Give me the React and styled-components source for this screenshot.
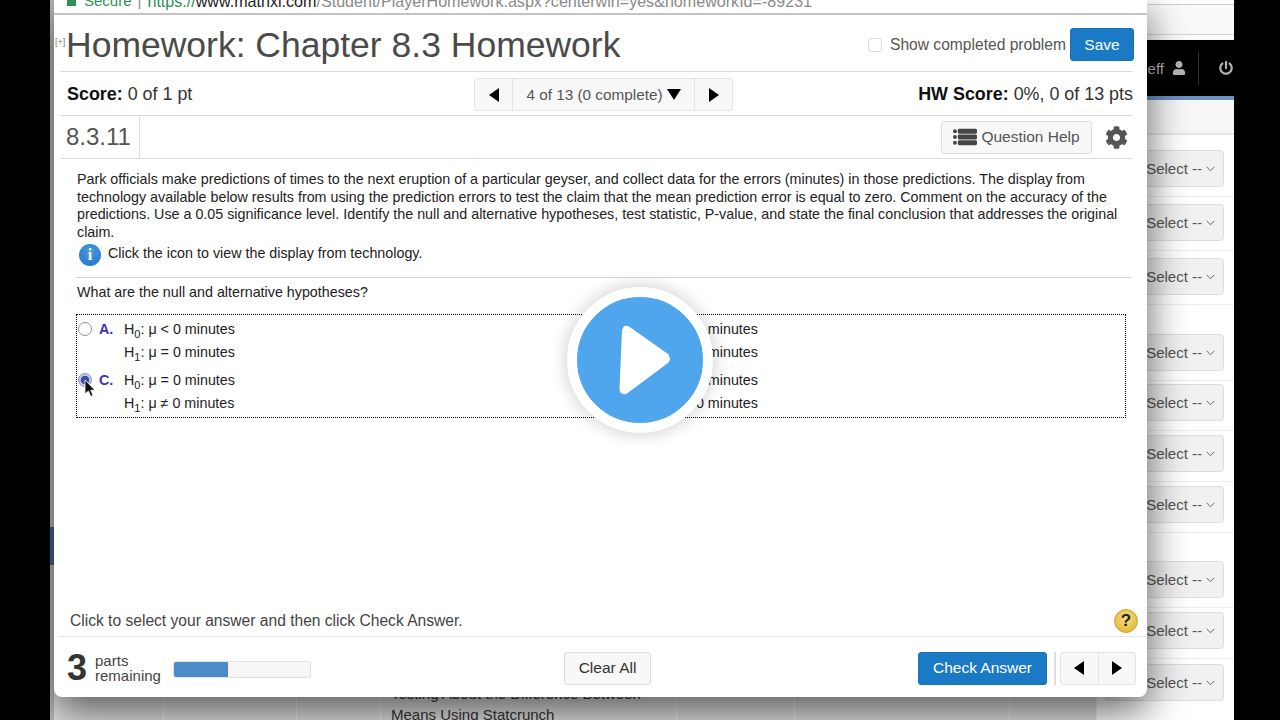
import React from "react";
import styled, { createGlobalStyle, css } from "styled-components";
import { FaCog, FaPowerOff, FaUser } from "react-icons/fa";

const sans = `"Liberation Sans", Arial, sans-serif`;

const GlobalStyle = createGlobalStyle`
  html, body {
    margin: 0;
    background: #000;
    font-family: ${sans};
  }
`;

/*
  page behind the dialog
*/
const Stage = styled.div`
  width: 1280px;
  height: 720px;
  background: #000;
  padding-left: 50px;
  box-sizing: border-box;
  position: relative;
  overflow: hidden;
`;

const Backdrop = styled.div`
  width: 1184px;
  height: 720px;
  display: flex;
  background: #fff;
  overflow: hidden;
`;

const SideRail = styled.div`
  width: 4px;
  flex: none;
  background: #b9b9b9;
  padding-top: 527px;
  box-sizing: border-box;
`;

const SideTab = styled.div`
  height: 38px;
  background: #46658c;
`;

const BackMain = styled.div`
  flex: 1;
  min-width: 0;
  display: flex;
  flex-direction: column;
`;

const TopStrip = styled.div`
  height: 40px;
  flex: none;
  box-sizing: border-box;
  background: linear-gradient(
    #fff 4px,
    #ccc 4px,
    #ccc 5px,
    #fafafa 5px,
    #fafafa 34px,
    #d5d5d5 34px,
    #d5d5d5 35px,
    #fafafa 35px
  );
`;

const NavBar = styled.div`
  height: 56px;
  flex: none;
  background: #000;
  color: #b5b5b5;
  display: flex;
  align-items: center;
  justify-content: flex-end;
  font-size: 15px;
  padding-right: 1px;
`;

const NavName = styled.span`
  margin-right: 8px;
`;

const NavSplit = styled.span`
  width: 1px;
  height: 33px;
  background: #333;
  margin: 0 20px 0 12px;
`;

const BlueRule = styled.div`
  height: 4px;
  flex: none;
  background: #6d8fc4;
`;

const HeadPanel = styled.div`
  height: 35px;
  flex: none;
  box-sizing: border-box;
  background: #f7f7f7;
  border-bottom: 2px solid #e6e6e6;
`;

const Row = styled.div`
  height: ${(p) => p.$h}px;
  flex: none;
  box-sizing: border-box;
  display: flex;
  justify-content: flex-end;
  align-items: flex-end;
  padding: 0 10px 9px 0;
  border-bottom: 1px solid #eee;
`;

const LastRow = styled.div`
  flex: 1;
  display: grid;
  grid-template-columns: 110px 133px 84px 296px 118px 215px 87px 1fr;
`;

const Cell = styled.div`
  background: #e2e2e2;
  border-right: 1px solid #f2f2f2;
  font-size: 15px;
  line-height: 21px;
  color: #333;
  padding: 24px 0 0 10px;
`;

const SelectBox = styled.div`
  width: 120px;
  height: 37px;
  flex: none;
  box-sizing: border-box;
  background: #f1f1f1;
  border: 1px solid #ddd;
  border-radius: 4px;
  color: #555;
  font-size: 15px;
  display: flex;
  align-items: center;
  justify-content: flex-end;
  gap: 4px;
  padding-right: 8px;
`;

const LastSelect = styled(SelectBox)`
  margin: 5px 0 0 7px;
`;

const Chevron = () => (
  <svg width="9" height="6" viewBox="0 0 9 6">
    <path d="M.7.9l3.8 3.8L8.3.9" fill="none" stroke="#666" strokeWidth="1" />
  </svg>
);

const Select = ({ as: Box = SelectBox }) => (
  <Box>
    Select --
    <Chevron />
  </Box>
);

/*
  dialog
*/
const Dialog = styled.div`
  position: absolute;
  left: 54px;
  top: 0;
  width: 1093px;
  height: 697px;
  background: #fff;
  border-radius: 0 0 8px 8px;
  box-shadow: 0 14px 40px rgba(0, 0, 0, 0.62);
  display: flex;
  flex-direction: column;
`;

const AddressBar = styled.div`
  height: 15px;
  flex: none;
  box-sizing: border-box;
  border-bottom: 2px solid #c4c4c4;
  overflow: hidden;
  display: flex;
  align-items: flex-end;
  gap: 6px;
  padding: 0 0 3px 13px;
  font-size: 15px;
  line-height: 18px;
  color: #8a8a8a;
  white-space: nowrap;
`;

const Lock = styled.span`
  width: 9px;
  height: 8px;
  background: #2f8f55;
  margin: 0 2px 4px 0;
`;

const SecureText = styled.span`
  color: #2f8f55;
`;

const Address = styled.span`
  font-size: 16.1px;
`;

const Host = styled.span`
  color: #222;
`;

const ruledCSS = css`
  margin: 0 14px 0 6px;
  border-bottom: 1px solid #ddd;
  display: flex;
  align-items: center;
  flex: none;
`;

const TitleRow = styled.div`
  ${ruledCSS}
  height: 57px;
  box-sizing: border-box;
  position: relative;
  padding: 3px 0 0 6px;
  justify-content: space-between;
`;

const Expand = styled.span`
  position: absolute;
  left: -5px;
  top: 22px;
  font-size: 9px;
  color: #777;
`;

const Title = styled.h1`
  margin: 1px 0 0;
  font-size: 35.5px;
  font-weight: 400;
  color: #4a4a4a;
`;

const TitleTools = styled.div`
  display: flex;
  align-items: center;
  margin-right: -1px;
`;

const Checkbox = styled.span`
  width: 14px;
  height: 14px;
  box-sizing: border-box;
  border: 1px solid #ddd;
  border-radius: 3px;
  margin-right: 8px;
`;

const ShowLabel = styled.span`
  font-size: 15.6px;
  color: #555;
  margin-right: 4px;
`;

const PrimaryButton = styled.button`
  height: ${(p) => p.$h}px;
  width: ${(p) => p.$w}px;
  padding: 0;
  border: 1px solid #1673ba;
  border-radius: 3px;
  background: #1a7ac6;
  color: #fff;
  font-family: ${sans};
  font-size: 15.5px;
`;

const ScoreRow = styled.div`
  ${ruledCSS}
  height: 44px;
  box-sizing: border-box;
  display: grid;
  grid-template-columns: 407px auto 1fr;
  padding: 2px 0 0 7px;
`;

const ScoreText = styled.div`
  font-size: 17.9px;
  color: #333;
  text-align: ${(p) => p.$align || "left"};
  b {
    color: #111;
  }
`;

const Pager = styled.div`
  display: flex;
  height: 33px;
  box-sizing: border-box;
  border: 1px solid #e4e4e4;
  border-radius: 3px;
  background: #f8f8f8;
`;

const PagerArrow = styled.div`
  width: 37px;
  display: flex;
  align-items: center;
  justify-content: center;
`;

const PagerLabel = styled.div`
  width: 183px;
  box-sizing: border-box;
  border-left: 1px solid #e4e4e4;
  border-right: 1px solid #e4e4e4;
  display: flex;
  align-items: center;
  justify-content: center;
  gap: 4px;
  font-size: 15.3px;
  color: #555;
`;

const triangles = {
  left: "border-width: 7.5px 10px 7.5px 0; border-color: transparent #000 transparent transparent;",
  right: "border-width: 7.5px 0 7.5px 10px; border-color: transparent transparent transparent #000;",
  down: "border-width: 11px 7.5px 0 7.5px; border-color: #000 transparent transparent transparent;",
};

const Triangle = styled.span`
  width: 0;
  height: 0;
  border-style: solid;
  ${(p) => triangles[p.$dir]}
`;

const QuestionRow = styled.div`
  ${ruledCSS}
  height: 43px;
  box-sizing: border-box;
`;

const QuestionNumber = styled.div`
  align-self: stretch;
  width: 80px;
  box-sizing: border-box;
  border-right: 1px solid #ddd;
  font-size: 24px;
  color: #555;
  display: flex;
  align-items: center;
  padding-left: 6px;
`;

const HelpButton = styled.button`
  margin-left: auto;
  width: 151px;
  height: 33px;
  padding: 0;
  box-sizing: border-box;
  background: #f8f8f8;
  border: 1px solid #ddd;
  border-radius: 3px;
  display: flex;
  align-items: center;
  justify-content: center;
  gap: 4px;
  font-family: ${sans};
  font-size: 15.5px;
  color: #555;
`;

const GearIcon = styled(FaCog)`
  color: #555;
  margin: 0 5px 0 13px;
  font-size: 23px;
`;

const Body = styled.div`
  flex: 1;
  padding: 12px 16px 0 23px;
  font-size: 14.3px;
  color: #222;
`;

const Prompt = styled.p`
  margin: 0;
  line-height: 17.5px;
  width: 1045px;
`;

const InfoLine = styled.div`
  display: flex;
  align-items: flex-start;
  gap: 7px;
  height: 34px;
  margin: 2px 0 0 2px;
  line-height: 20px;
`;

const InfoIcon = styled.span`
  width: 22px;
  height: 22px;
  margin-top: 1px;
  border-radius: 50%;
  background: radial-gradient(circle at 50% 35%, #4b9ae2, #1f73c6);
  color: #fff;
  font: 700 16px/22px "Liberation Serif", serif;
  text-align: center;
`;

const Rule = styled.div`
  margin-left: -2px;
  height: 1px;
  background: #d5d5d5;
`;

const Ask = styled.p`
  margin: 6px 0 13px;
  line-height: 17px;
`;

const OptionBox = styled.div`
  margin-left: -1px;
  width: 1050px;
  height: 104px;
  box-sizing: border-box;
  border: 1px dotted #000;
  padding-top: 3px;
  display: grid;
  grid-template-columns: 516px 1fr;
  grid-auto-rows: 51px;
`;

const Option = styled.div`
  display: grid;
  grid-template-columns: 21px 25px 1fr;
  padding-left: ${(p) => (p.$right ? 8 : 1)}px;
  line-height: 23px;
  position: relative;
`;

const Radio = styled.span`
  width: 14px;
  height: 14px;
  margin-top: 4px;
  box-sizing: border-box;
  border-radius: 50%;
  border: 1.5px solid #8f8fb0;
  background: ${(p) => (p.$on ? "radial-gradient(circle, #3b4fa8 45%, #c6cbe8 55%)" : "#fff")};
`;

const OptionLetter = styled.span`
  font-weight: 700;
  color: #4038a8;
`;

const Sub = styled.sub`
  font-size: 11px;
  line-height: 0;
`;

const Pointer = styled.svg`
  position: absolute;
  left: 7px;
  top: 10px;
`;

const Instruction = styled.div`
  ${ruledCSS}
  margin: 0 0 0 4px;
  height: 31px;
  box-sizing: border-box;
  border-bottom-color: #e8e8e8;
  font-size: 15.6px;
  color: #444;
  padding-left: 12px;
  justify-content: space-between;
`;

const QuestionMark = styled.span`
  width: 24px;
  height: 24px;
  margin: 0 9px 0 0;
  border-radius: 50%;
  background: radial-gradient(circle at 50% 40%, #f8df80, #dcae2c);
  border: 1px solid #cfa535;
  box-sizing: border-box;
  color: #222;
  font-weight: 700;
  font-size: 17px;
  line-height: 22px;
  text-align: center;
`;

const Footer = styled.div`
  height: 60px;
  flex: none;
  box-sizing: border-box;
  display: grid;
  grid-template-columns: 497px auto 1fr;
  align-items: center;
  padding: 2px 11px 0 13px;
`;

const Remaining = styled.div`
  display: flex;
  align-items: center;
`;

const PartsCount = styled.span`
  font-size: 36px;
  font-weight: 700;
  color: #333;
  margin-right: 8px;
`;

const PartsLabel = styled.span`
  font-size: 15px;
  line-height: 15px;
  color: #444;
  margin-right: 12px;
`;

const Progress = styled.div`
  width: 138px;
  height: 17px;
  margin-top: 2px;
  box-sizing: border-box;
  border: 1px solid #e2e2e2;
  border-radius: 3px;
  background: #f6f6f6;
  overflow: hidden;
`;

const ProgressFill = styled.div`
  height: 100%;
  background: #4a8bc8;
`;

const PlainButton = styled.button`
  width: 87px;
  height: 33px;
  padding: 0;
  background: #f8f8f8;
  border: 1px solid #ddd;
  border-radius: 3px;
  font-family: ${sans};
  font-size: 15.5px;
  color: #333;
`;

const FooterActions = styled.div`
  display: flex;
  align-items: center;
  justify-content: flex-end;
`;

const ActionSplit = styled.span`
  width: 2px;
  height: 33px;
  background: #ddd;
  margin: 0 4px 0 7px;
`;

const NavPair = styled.div`
  display: flex;
  height: 33px;
  box-sizing: border-box;
  border: 1px solid #e4e4e4;
  border-radius: 3px;
  background: #f8f8f8;
`;

const NavPairButton = styled.div`
  width: 36.5px;
  display: flex;
  align-items: center;
  justify-content: center;
  & + & {
    border-left: 1px solid #e4e4e4;
  }
`;

/*
  video play overlay
*/
const PlayOverlay = styled.div`
  position: absolute;
  left: 567px;
  top: 287px;
  width: 146px;
  height: 146px;
  box-sizing: border-box;
  border: 10px solid #fff;
  border-radius: 50%;
  background: #4fa6ec;
  box-shadow: 0 0 18px rgba(0, 0, 0, 0.22);
  display: flex;
  align-items: center;
  justify-content: center;
`;

const PlayGlyph = styled.svg`
  margin-left: 10px;
`;

const rowHeights = [62, 54, 54, 76, 50, 51, 51, 75, 51];
const columns = [0, 1, 2, 3, 4, 5, 6];

const Hypothesis = ({ h0, h1 }) => (
  <div>
    <div>
      H<Sub>0</Sub>: μ {h0} minutes
    </div>
    <div>
      H<Sub>1</Sub>: μ {h1} minutes
    </div>
  </div>
);

const App = () => {
  return (
    <Stage>
      <GlobalStyle />
      <Backdrop>
        <SideRail>
          <SideTab />
        </SideRail>
        <BackMain>
          <TopStrip />
          <NavBar>
            <NavName>Jeff</NavName>
            <FaUser size={14} />
            <NavSplit />
            <FaPowerOff size={14} />
          </NavBar>
          <BlueRule />
          <HeadPanel />
          {rowHeights.map((h, i) => (
            <Row key={i} $h={h}>
              <Select />
            </Row>
          ))}
          <LastRow>
            {columns.map((c) => (
              <Cell key={c}>
                {c === 3 && "Testing About the Difference Between Means Using Statcrunch"}
              </Cell>
            ))}
            <Select as={LastSelect} />
          </LastRow>
        </BackMain>
      </Backdrop>

      <Dialog>
        <AddressBar>
          <Lock />
          <SecureText>Secure</SecureText>
          <span>|</span>
          <Address>
            <SecureText>https://</SecureText>
            <Host>www.mathxl.com</Host>/Student/PlayerHomework.aspx?centerwin=yes&amp;homeworkId=-89231
          </Address>
        </AddressBar>

        <TitleRow>
          <Expand>[+]</Expand>
          <Title>Homework: Chapter 8.3 Homework</Title>
          <TitleTools>
            <Checkbox />
            <ShowLabel>Show completed problem</ShowLabel>
            <PrimaryButton $w={64} $h={33}>Save</PrimaryButton>
          </TitleTools>
        </TitleRow>

        <ScoreRow>
          <ScoreText>
            <b>Score:</b> 0 of 1 pt
          </ScoreText>
          <Pager>
            <PagerArrow>
              <Triangle $dir="left" />
            </PagerArrow>
            <PagerLabel>
              4 of 13 (0 complete)
              <Triangle $dir="down" />
            </PagerLabel>
            <PagerArrow>
              <Triangle $dir="right" />
            </PagerArrow>
          </Pager>
          <ScoreText $align="right">
            <b>HW Score:</b> 0%, 0 of 13 pts
          </ScoreText>
        </ScoreRow>

        <QuestionRow>
          <QuestionNumber>8.3.11</QuestionNumber>
          <HelpButton>
            <svg width="24" height="18" viewBox="0 0 25 18" fill="#444">
              <circle cx="2" cy="3" r="2" />
              <circle cx="2" cy="9" r="2" />
              <circle cx="2" cy="15" r="2" />
              <rect x="5" y="0.5" width="20" height="5" rx="1.5" />
              <rect x="5" y="6.5" width="20" height="5" rx="1.5" />
              <rect x="5" y="12.5" width="20" height="5" rx="1.5" />
            </svg>
            Question Help
          </HelpButton>
          <GearIcon />
        </QuestionRow>

        <Body>
          <Prompt>
            Park officials make predictions of times to the next eruption of a particular geyser, and collect data for the errors (minutes) in those predictions. The display from technology available below results from using the prediction errors to test the claim that the mean prediction error is equal to zero. Comment on the accuracy of the predictions. Use a 0.05 significance level. Identify the null and alternative hypotheses, test statistic, P-value, and state the final conclusion that addresses the original claim.
          </Prompt>
          <InfoLine>
            <InfoIcon>i</InfoIcon>
            Click the icon to view the display from technology.
          </InfoLine>
          <Rule />
          <Ask>What are the null and alternative hypotheses?</Ask>
          <OptionBox>
            <Option>
              <Radio />
              <OptionLetter>A.</OptionLetter>
              <Hypothesis h0="< 0" h1="= 0" />
            </Option>
            <Option $right>
              <Radio />
              <OptionLetter>B.</OptionLetter>
              <Hypothesis h0="= 0" h1="< 0" />
            </Option>
            <Option>
              <Radio $on />
              <OptionLetter>C.</OptionLetter>
              <Hypothesis h0="= 0" h1="≠ 0" />
              <Pointer width="11" height="18" viewBox="0 0 11 18">
                <path d="M1 1v14l3.4-3 2.4 5.4 2.3-1-2.4-5.2H11z" fill="#111" stroke="#fff" strokeWidth=".8" />
              </Pointer>
            </Option>
            <Option $right>
              <Radio />
              <OptionLetter>D.</OptionLetter>
              <Hypothesis h0="> 0" h1="= 0" />
            </Option>
          </OptionBox>
        </Body>

        <Instruction>
          Click to select your answer and then click Check Answer.
          <QuestionMark>?</QuestionMark>
        </Instruction>

        <Footer>
          <Remaining>
            <PartsCount>3</PartsCount>
            <PartsLabel>
              parts
              <br />
              remaining
            </PartsLabel>
            <Progress>
              <ProgressFill style={{ width: `${(1 / 2.5) * 100}%` }} />
            </Progress>
          </Remaining>
          <PlainButton>Clear All</PlainButton>
          <FooterActions>
            <PrimaryButton $w={129} $h={33}>Check Answer</PrimaryButton>
            <ActionSplit />
            <NavPair>
              <NavPairButton>
                <Triangle $dir="left" />
              </NavPairButton>
              <NavPairButton>
                <Triangle $dir="right" />
              </NavPairButton>
            </NavPair>
          </FooterActions>
        </Footer>
      </Dialog>

      <PlayOverlay>
        <PlayGlyph width="53" height="70" viewBox="0 0 53 70">
          <path d="M10 1.5 L49 29 Q53 34 49 38 L8 68.5 Q1 71 .5 64 L3 6 Q4 -1 10 1.5 Z" fill="#fff" />
        </PlayGlyph>
      </PlayOverlay>
    </Stage>
  );
};

export default App;
